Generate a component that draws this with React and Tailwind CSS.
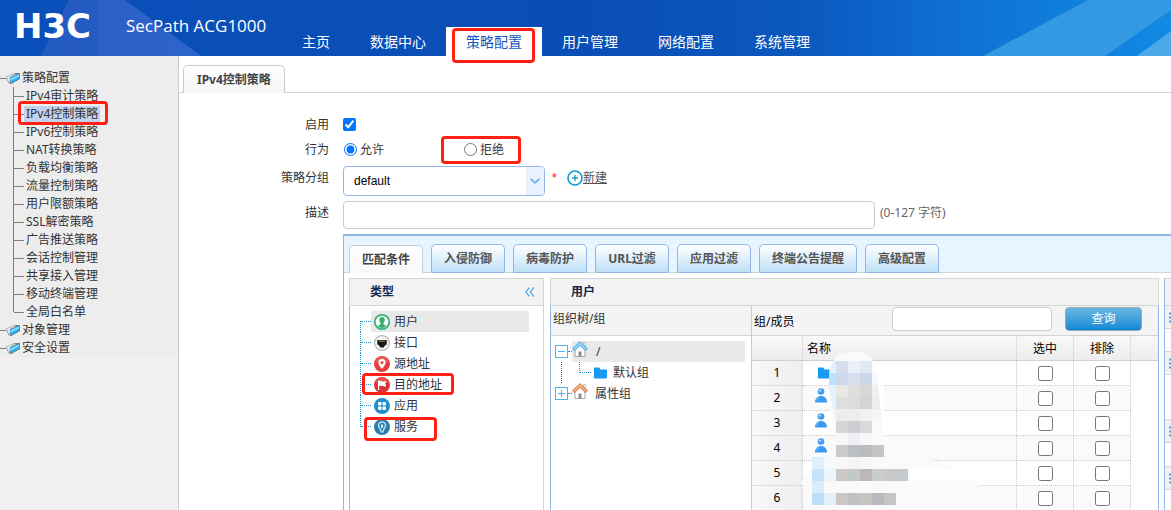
import { useState } from 'react';

const NAV = ['主页', '数据中心', '策略配置', '用户管理', '网络配置', '系统管理'];

const POLICY_ITEMS = [
  'IPv4审计策略',
  'IPv4控制策略',
  'IPv6控制策略',
  'NAT转换策略',
  '负载均衡策略',
  '流量控制策略',
  '用户限额策略',
  'SSL解密策略',
  '广告推送策略',
  '会话控制管理',
  '共享接入管理',
  '移动终端管理',
  '全局白名单',
];

const TABS = ['匹配条件', '入侵防御', '病毒防护', 'URL过滤', '应用过滤', '终端公告提醒', '高级配置'];

const TYPES = [
  { label: '用户', icon: 'user' },
  { label: '接口', icon: 'port' },
  { label: '源地址', icon: 'pin' },
  { label: '目的地址', icon: 'flag', mark: 'left-3 right-[89px] -top-px h-[22px]' },
  { label: '应用', icon: 'apps' },
  { label: '服务', icon: 'service', mark: 'left-[14px] right-[106px] top-px h-6' },
];

const MEMBERS = ['folder', 'person', 'person', 'person', '', ''];

// [x, y, colour] of every 12px cell that hides a member name
const CELLS = [
  [36, 11, '#d6deec'], [48, 11, '#ebeff8'], [60, 11, '#e2e8f1'],
  [36, 23, '#cdd8e9'], [48, 23, '#d9e0ed'], [60, 23, '#ccd8ea'], [72, 23, '#f5f9fe'],
  [36, 35, '#e8e8e4'], [48, 35, '#dfdedd'], [60, 35, '#d8d7d6'], [72, 35, '#f0f0f1'],
  [36, 47, '#dedede'], [48, 47, '#dddcdb'], [60, 47, '#d5d4d2'], [72, 47, '#ededee'],
  [36, 59, '#ededee'], [48, 59, '#efecee'], [60, 59, '#eff2f1'], [72, 59, '#f5f5f6'],
  [36, 71, '#d5d6d6'], [48, 71, '#cdced4'], [60, 71, '#d9d9d9'],
  [36, 83, '#f7f7f7'], [48, 83, '#f0f0f4'], [60, 83, '#f8f8f8'], [72, 83, '#fafafa'],
  [36, 95, '#cbcbcb'], [48, 95, '#bcbfc2'], [60, 95, '#babdbd'], [72, 95, '#c4c4c2'],
  [12, 107, '#ddeffb'], [24, 107, '#f5fafd'], [36, 107, '#f8f8f8'], [48, 107, '#f4f4f4'], [60, 107, '#f7f7f7'],
  [12, 119, '#c4e3fb'], [24, 119, '#eaf5fd'], [36, 119, '#cdc8c8'], [48, 119, '#c3c9c9'], [60, 119, '#beb7b7'],
  [72, 119, '#c8cccc'], [84, 119, '#cbc8ca'], [96, 119, '#c4cbcf'],
  [12, 131, '#d9ecf9'],
  [12, 143, '#bcdef9'], [24, 143, '#e3f1fa'], [36, 143, '#cac7c5'], [48, 143, '#c0c2c3'], [60, 143, '#c4c4c0'],
  [72, 143, '#bab8c0'], [84, 143, '#c4c6c6'],
];

function Mark({ className }) {
  return <span className={`absolute z-10 border-[3px] border-[#fe2013] rounded-[4px] pointer-events-none ${className}`} />;
}

function HeaderArt() {
  return (
    <svg className="absolute inset-0 w-full h-full" viewBox="0 0 1171 56" preserveAspectRatio="none" aria-hidden="true">
      <defs>
        <linearGradient id="sky" x1="0" x2="1">
          <stop offset="0" stopColor="#0a50ba" />
          <stop offset="0.5" stopColor="#0a4db5" />
          <stop offset="0.68" stopColor="#0b57be" />
          <stop offset="0.85" stopColor="#0f76d6" />
          <stop offset="1" stopColor="#118ae3" />
        </linearGradient>
        <linearGradient id="beam" x1="0" x2="1">
          <stop offset="0" stopColor="#2b5fc4" />
          <stop offset="1" stopColor="#2f65cd" />
        </linearGradient>
      </defs>
      <rect width="1171" height="56" fill="url(#sky)" />
      <path d="M69 0H125L201 56H41Z" fill="url(#beam)" opacity=".95" />
      <path d="M69 0H97V56H41Z" fill="#1d55bd" opacity=".5" />
      <path d="M1088 0H1171V10L1105 56H983Z" fill="#3499e3" />
      <path d="M1171 31V56H1137Z" fill="#4aa9e8" />
    </svg>
  );
}

function BookIcon() {
  return (
    <svg className="w-[14px] h-[14px] shrink-0" viewBox="0 0 14 14" aria-hidden="true">
      <path d="M0 6 8.500 2.200 13.800 2 14 8 5.200 13 2.500 12Z" fill="#64727c" />
      <path d="M.3 5.700 8.500 2.700l1.500.6-6 3V12L2.800 11.500Z" fill="#eaf3f8" stroke="#98a4ac" strokeWidth=".6" />
      <path d="M3.500 7.300 13.300 2.600 13.500 7.500 5.200 12.200Z" fill="#2aaaf0" />
      <path d="M4.200 7.600 12.800 3.500 13 5.400 4.900 9.800Z" fill="#86d8fc" />
    </svg>
  );
}

function TypeIcon({ name }) {
  const fill = {
    user: '#35ad6b',
    port: '#b9b9b9',
    pin: '#e5423f',
    flag: '#dc3338',
    apps: '#1e8dcb',
    service: '#2b7cab',
  }[name];
  return (
    <svg className="w-4 h-4 shrink-0" viewBox="0 0 16 16" aria-hidden="true">
      <circle cx="8" cy="8" r="8" fill={fill} />
      {name === 'user' && (
        <>
          <circle cx="8" cy="8" r="6.3" fill="#fff" />
          <path d="M8 3a2.8 2.8 0 0 0-2.7 3c0 1.3.5 2.3 1.3 3v1.3L3.6 12A6 6 0 0 0 12.4 12l-3-1.7V9c.8-.7 1.3-1.7 1.3-3A2.8 2.8 0 0 0 8 3Z" fill="#35ad6b" />
        </>
      )}
      {name === 'port' && (
        <>
          <circle cx="8" cy="8" r="6.8" fill="#f5f5f5" />
          <path d="M3.3 5h9.4v4.7h-1.5v1.6H10V12.4H6V11.3H4.8V9.7H3.3Z" fill="#171717" />
          <path d="M5 5.4h6V7H5Z" fill="#6d6533" />
        </>
      )}
      {name === 'pin' && (
        <>
          <path d="M1.2 6a7 7 0 0 1 13.6 0Z" fill="#f16d68" opacity=".6" />
          <path d="M8 3a3.6 3.6 0 0 0-3.6 3.6C4.4 9.200 8 13 8 13s3.600-3.800 3.600-6.400A3.600 3.600 0 0 0 8 3Z" fill="#fff" />
          <circle cx="8" cy="6.600" r="1.500" fill="#e5423f" />
        </>
      )}
      {name === 'flag' && (
        <>
          <path d="M1.200 6a7 7 0 0 1 13.600 0Z" fill="#ee6a68" opacity=".6" />
          <path d="M4 3.500h1.200V4c2-.8 3.200.9 5 .6l2-.4-1 2.600 1 2.400c-2.400.8-4-.8-7-.2V13H4Z" fill="#fff" />
        </>
      )}
      {name === 'apps' && (
        <g fill="#fff">
          <rect x="4" y="4" width="3.500" height="3.500" rx=".8" />
          <rect x="8.500" y="4" width="3.500" height="3.500" rx=".8" />
          <rect x="4" y="8.500" width="3.500" height="3.500" rx=".8" />
          <rect x="8.500" y="8.500" width="3.500" height="3.500" rx=".8" />
        </g>
      )}
      {name === 'service' && (
        <>
          <path d="M8 2.800A3.600 3.600 0 0 0 5.800 9.200L7 12.800h2l1.200-3.600A3.600 3.600 0 0 0 8 2.800Z" fill="none" stroke="#bfe3f5" strokeWidth="1.300" />
          <path d="M8 4.500 9.400 7 8 10 6.600 7Z" fill="#d8f0fb" />
        </>
      )}
    </svg>
  );
}

function HouseIcon({ roof, edge }) {
  return (
    <svg className="w-4 h-4 shrink-0" viewBox="0 0 16 16" aria-hidden="true">
      <path d="M3 8V15.500H13V8L8 3.500Z" fill="#fff" stroke="#a5a5a5" />
      <path d="M11.500 1.500h1.800V5h-1.800Z" fill="#fff" stroke="#a5a5a5" strokeWidth=".7" />
      <path d="M6.500 10.500h3v5h-3Z" fill="#8e8e8e" />
      <path d="M8 .6 15.500 7.600 13.600 9.700 8 4.600 2.400 9.700.5 7.600Z" fill={roof} stroke={edge} strokeWidth=".8" />
    </svg>
  );
}

function FolderIcon() {
  return (
    <svg className="w-[14px] h-3 shrink-0" viewBox="0 0 14 12" aria-hidden="true">
      <path d="M0 1.200Q0 .5.8.5H5l1.500 2H12.200Q13 2.500 13 3.300V10.700Q13 11.500 12.200 11.500H.8Q0 11.500 0 10.700Z" fill="#1599f3" />
    </svg>
  );
}

function PersonIcon() {
  return (
    <svg className="w-3 h-[15px]" viewBox="0 0 12 15" aria-hidden="true">
      <circle cx="6" cy="3.500" r="3.300" fill="#3f9df2" />
      <circle cx="5" cy="2.600" r="1.200" fill="#b5dcfb" />
      <path d="M0 14.500C0 10.500 2.500 8 6 8s6 2.500 6 6.500Z" fill="#3a99f1" />
      <path d="M1 13.500C1.200 11 2.500 9.500 4.500 9Z" fill="#8cc5f8" />
    </svg>
  );
}

function Toggle({ open }) {
  return (
    <button type="button" aria-label={open ? '收起' : '展开'} className="w-[13px] h-[13px] shrink-0 border border-[#4db1f2] bg-white">
      <svg className="w-[11px] h-[11px]" viewBox="0 0 11 11" stroke="#4db1f2" aria-hidden="true">
        <path d={open ? 'M2 5.500h7' : 'M2 5.500h7M5.500 2v7'} />
      </svg>
    </button>
  );
}

function Header() {
  return (
    <header className="relative h-14 shrink-0 bg-[#0a4db5] text-white">
      <HeaderArt />
      <div className="relative flex h-full">
        <div className="w-[126px] shrink-0 pl-[14px] pt-2 font-['DejaVu_Sans',sans-serif] text-[34px] leading-9 font-bold">H3C</div>
        <h1 className="w-[156px] shrink-0 pt-[14px] font-['Open_Sans',sans-serif] text-[17px] leading-6 whitespace-nowrap">SecPath ACG1000</h1>
        <nav className="flex items-end">
          {NAV.map((item) => (
            <a
              key={item}
              href="#"
              className={`relative px-5 text-sm leading-[29px] whitespace-nowrap ${item === '策略配置' ? 'bg-white text-[#1259bd]' : ''}`}
            >
              {item}
              {item === '策略配置' && <Mark className="left-[6px] right-[7px] top-px h-[35px]" />}
            </a>
          ))}
        </nav>
      </div>
    </header>
  );
}

function Root({ label }) {
  return (
    <a href="#" className="flex items-center h-[18px]">
      <span className="w-[6px] border-t border-[#808080]" />
      <BookIcon />
      <span className="pl-[2px]">{label}</span>
    </a>
  );
}

function Sidebar() {
  return (
    <aside className="w-[179px] shrink-0 border-r border-[#ccc] bg-[#f0f0f0] text-[#333]">
      <div className="pt-[13px] pb-[1px] bg-[#ededed]">
        <Root label="策略配置" />
        <ul className="pl-[13px]">
          {POLICY_ITEMS.map((item, i) => (
            <li key={item} className="relative flex items-center h-[18px]">
              <span className={`w-px bg-[#808080] ${i === POLICY_ITEMS.length - 1 ? 'h-[9px] self-start' : 'h-full'}`} />
              <span className="w-[10px] border-t border-[#808080]" />
              <a href="#" className={`px-[2px] leading-4 ${i === 1 ? 'bg-[#c1d2ee]' : ''}`}>
                {item}
              </a>
              {i === 1 && <Mark className="left-[5px] w-[90px] -top-1 h-6" />}
            </li>
          ))}
        </ul>
        <Root label="对象管理" />
        <Root label="安全设置" />
      </div>
    </aside>
  );
}

function TypePanel() {
  return (
    <section className="w-[195px] shrink-0 flex flex-col border border-[#d4d4d4] border-b-0">
      <div className="flex items-center justify-between h-[27px] pl-5 pr-2 bg-[#f3f3f3] border-b border-[#d4d4d4]">
        <h2 className="font-bold text-[#13294f]">类型</h2>
        <button type="button" aria-label="收起">
          <svg className="w-[10px] h-[10px]" viewBox="0 0 10 10" fill="none" stroke="#57a9e6" strokeWidth="1.200" aria-hidden="true">
            <path d="M4.500.5.8 5l3.700 4.500M9 .5 5.300 5 9 9.500" />
          </svg>
        </button>
      </div>
      <ul className="flex-1 pt-[5px] -ml-px border-l border-[#94b5e8]">
        {TYPES.map(({ label, icon, mark }, i) => (
          <li key={label} className="relative flex h-[21px] pl-[10px] pr-[14px]">
            <span className={`border-l border-dotted border-[#1c94e0] ${i === 0 ? 'h-[11px] self-end' : i === 5 ? 'h-[11px]' : ''}`} />
            <span className="w-[10px] h-[11px] border-b border-dotted border-[#1c94e0]" />
            <a href="#" className={`flex flex-1 items-center pl-[3px] gap-1 text-[#333] ${i === 0 ? 'bg-[#e9e9e9]' : ''}`}>
              <TypeIcon name={icon} />
              {label}
            </a>
            {mark && <Mark className={mark} />}
          </li>
        ))}
      </ul>
    </section>
  );
}

function GroupTree() {
  return (
    <div className="w-[200px] shrink-0 flex flex-col">
      <div className="h-[30px] pl-[2px] leading-[26px] bg-[#f4f4f4] border-b border-[#d4d4d4] text-[#333]">组织树/组</div>
      <div className="flex-1 pt-[5px] pl-1 pr-[6px] bg-white text-[#333]">
        <div className="flex items-center h-[21px]">
          <Toggle open />
          <span className="w-1 border-t border-dotted border-[#1c94e0]" />
          <a href="#" className="flex flex-1 h-full gap-2 bg-[#e9e9e9] leading-[22px]">
            <HouseIcon roof="#8bd3f7" edge="#3aa3dd" />/
          </a>
        </div>
        <div className="flex h-[21px] pl-[6px]">
          <span className="w-[18px] border-l border-dotted border-[#555]" />
          <span className="w-[12px] h-[11px] border-l border-b border-dotted border-[#1c94e0]" />
          <a href="#" className="flex items-center gap-[5px] pl-[3px]">
            <FolderIcon />
            默认组
          </a>
        </div>
        <div className="flex items-center h-[21px]">
          <Toggle />
          <span className="w-1 border-t border-dotted border-[#1c94e0]" />
          <a href="#" className="flex h-full gap-[7px] leading-[22px]">
            <HouseIcon roof="#f5a97d" edge="#cf6a35" />
            属性组
          </a>
        </div>
      </div>
    </div>
  );
}

function Mosaic() {
  return (
    <svg className="absolute left-[48px] top-[14px] w-[200px] h-[166px] pointer-events-none" viewBox="0 0 200 166" aria-hidden="true">
      <path d="M34 8Q42 1 58 2 70 2 74 14L82 80 86 93 110 108Q135 108 157 119L110 119 110 131H176L184 143H110V155L66 166H20L4 144 2 132Q10 114 38 103L40 98 35 86 30 60Z" fill="#fafafa" />
      <path d="M34 11H36V23H29Q30 15 34 11Z" fill="#e3f1fd" />
      <path d="M29 23H36V35H29Z" fill="#bce1fb" />
      <path d="M29 35H36V70Q31 54 29 35Z" fill="#e5f3fd" />
      {CELLS.map(([x, y, color]) => (
        <rect key={`${x}-${y}`} x={x} y={y} width="12" height="12" fill={color} shapeRendering="crispEdges" />
      ))}
      <path d="M76 11 79 45 82 71H84V11Z" fill="#fff" />
    </svg>
  );
}

function MemberTable() {
  const cell = 'border-r border-b border-dotted border-[#c8c8c8] p-0';
  const head = 'border-r border-dotted border-r-[#c8c8c8] p-0 font-normal';
  return (
    <div className="relative">
      <table className="w-full table-fixed border-separate border-spacing-0 text-black">
        <colgroup>
          <col className="w-[51px]" />
          <col />
          <col className="w-[57px]" />
          <col className="w-[57px]" />
          <col className="w-[27px]" />
        </colgroup>
        <thead>
          <tr className="h-[25px] bg-linear-to-b from-[#f9f9f9] to-[#ececec] shadow-[inset_0_-1px_0_#d0d0d0]">
            <th className={head} aria-label="序号" />
            <th className={`${head} pl-1 text-left`}>名称</th>
            <th className={head}>选中</th>
            <th className={head}>排除</th>
            <th className="p-0" />
          </tr>
        </thead>
        <tbody>
          {MEMBERS.map((icon, i) => (
            <tr key={i} className={`h-[25px] ${i % 2 ? 'bg-[#fafafa]' : 'bg-white'}`}>
              <td className={`${cell} text-center bg-linear-to-r from-[#f8f8f8] to-[#eeeeee]`}>{i + 1}</td>
              <td className={`${cell} pl-3`}>
                {icon === 'folder' && <div className="pl-[3px]"><FolderIcon /></div>}
                {icon === 'person' && <div className="pb-[5px]"><PersonIcon /></div>}
              </td>
              {['选中', '排除'].map((name) => (
                <td key={name} className={cell}>
                  <input type="checkbox" aria-label={`${name} ${i + 1}`} className="block mx-auto w-[15px] h-[15px]" />
                </td>
              ))}
              <td className="p-0 bg-white" />
            </tr>
          ))}
        </tbody>
      </table>
      <Mosaic />
    </div>
  );
}

function UserPanel() {
  return (
    <section className="flex-1 min-w-0 flex flex-col border border-[#d4d4d4] border-b-0">
      <h2 className="h-[27px] pl-5 leading-[26px] font-bold text-[#13294f] bg-[#f3f3f3] border-b border-[#d4d4d4]">用户</h2>
      <div className="flex flex-1 min-h-0 -mx-px border-x border-[#94b5e8]">
        <GroupTree />
        <div className="flex-1 min-w-0 border-l border-[#ccc]">
          <div className="flex items-start h-[30px] pt-px pl-[2px] pr-4 bg-[#f4f4f4] border-b border-[#d4d4d4]">
            <label htmlFor="member" className="mr-auto leading-[30px] text-black">组/成员</label>
            <input id="member" type="text" className="w-40 h-6 px-2 bg-white border border-[#ccc] rounded-[4px]" />
            <button
              type="button"
              className="w-[77px] h-6 ml-[13px] rounded-[4px] border border-[#9aa7b0] bg-linear-to-b from-[#67b8e2] to-[#0289d6] text-white leading-[22px]"
            >
              查询
            </button>
          </div>
          <MemberTable />
        </div>
      </div>
    </section>
  );
}

function ListBar({ className }) {
  return (
    <div className={`flex items-center h-6 pl-1 bg-[#f2f2f2] border-b border-[#d4d4d4] ${className}`}>
      <svg className="w-3 h-[11px] shrink-0" viewBox="0 0 12 11" fill="#45aae4" aria-hidden="true">
        <path d="M0 .5h2v2H0zM3 .5h9v2H3zM0 4.500h2v2H0zM3 4.500h9v2H3zM0 8.500h2v2H0zM3 8.500h9v2H3z" />
      </svg>
    </div>
  );
}

// The selected-items column starts at the window's right edge
function SelectedPanel() {
  return (
    <section className="w-[7px] shrink-0 overflow-hidden border-l border-[#94b5e8]">
      <div className="h-7 bg-[#f3f3f3] border-y border-[#d4d4d4]" />
      <ListBar className="h-[23px]" />
      <ListBar className="mt-[22px] border-t" />
      <ListBar className="mt-11 border-t" />
      <ListBar className="mt-[23px] border-t" />
    </section>
  );
}

function PolicyForm() {
  const [enabled, setEnabled] = useState(true);
  const [action, setAction] = useState('允许');
  const label = 'w-[150px] shrink-0 text-right leading-6';
  return (
    <form className="pt-[19px] text-[#333]">
      <div className="flex items-center gap-[14px] h-[25px]">
        <label htmlFor="enabled" className={label}>启用</label>
        <input id="enabled" type="checkbox" className="w-[13px] h-[13px]" checked={enabled} onChange={(e) => setEnabled(e.target.checked)} />
      </div>
      <div className="flex items-center gap-[14px] h-[25px]">
        <span className={label}>行为</span>
        {['允许', '拒绝'].map((name) => (
          <label key={name} className="relative flex items-center gap-[3px] w-[106px] leading-6 pl-px">
            <input type="radio" name="action" className="w-[13px] h-[13px]" checked={action === name} onChange={() => setAction(name)} />
            {name}
            {name === '拒绝' && <Mark className="-left-[22px] w-20 -top-[2px] h-7" />}
          </label>
        ))}
      </div>
      <div className="flex gap-[14px] mt-1 h-[30px]">
        <label htmlFor="group" className={label}>策略分组</label>
        <div className="relative w-[202px]">
          <select
            id="group"
            className="w-full h-full pl-[10px] appearance-none bg-white border border-[#94b5e8] rounded-[4px] font-['Liberation_Sans',sans-serif] text-black"
          >
            <option>default</option>
          </select>
          <span className="absolute right-px top-px bottom-px w-[18px] flex items-center justify-center bg-[#e9f2fe] rounded-r-[3px] pointer-events-none">
            <svg className="w-[10px] h-[6px]" viewBox="0 0 10 6" fill="none" stroke="#66b7ee" strokeWidth="1.800" aria-hidden="true">
              <path d="M.6.8 5 4.800 9.400.8" />
            </svg>
          </span>
        </div>
        <div className="flex items-start -ml-[7px] leading-6">
          <span className="w-[15px] font-['Liberation_Sans',sans-serif] text-[#f00]">*</span>
          <a href="#" className="flex items-center text-[#555]">
            <svg className="w-4 h-4" viewBox="0 0 16 16" fill="none" stroke="#0c9bd0" aria-hidden="true">
              <circle cx="8" cy="8" r="7" strokeWidth="1.600" />
              <path d="M5 8h6M8 5v6" strokeWidth="1.300" />
            </svg>
            <span className="underline">新建</span>
          </a>
        </div>
      </div>
      <div className="flex gap-[14px] mt-[5px] h-7">
        <label htmlFor="desc" className={label}>描述</label>
        <input id="desc" type="text" className="w-[532px] h-full px-2 border border-[#ccc] rounded-[4px]" />
        <span className="-ml-[9px] leading-6 text-[#666]">(0-127 字符)</span>
      </div>
    </form>
  );
}

export default function App() {
  const [tab, setTab] = useState('匹配条件');

  return (
    <div className="h-screen flex flex-col overflow-hidden bg-white font-['Noto_Sans','Noto_Sans_CJK_SC',sans-serif] text-xs">
      <Header />
      <div className="flex flex-1 min-h-0">
        <Sidebar />
        <main className="flex-1 min-w-0 flex flex-col">
          <div className="flex items-end h-[37px] shrink-0 pl-1 border-b border-[#d4d4d4]">
            <h2 className="-mb-px px-[13px] h-7 leading-7 font-bold text-[#444] border border-b-0 border-[#ccc] rounded-t-[5px] bg-linear-to-b from-white to-[#f6f6f6]">
              IPv4控制策略
            </h2>
          </div>
          <PolicyForm />

          <div className="flex flex-col flex-1 min-h-0 ml-[164px] mt-[5px] border-l border-t-2 border-[#94b5e8]">
            <div className="flex items-end h-[37px] shrink-0 gap-2 pl-[5px] bg-[#e6f5ff] border-b border-[#d4d4d4]">
              {TABS.map((name) => (
                <button
                  key={name}
                  type="button"
                  onClick={() => setTab(name)}
                  className={`min-w-[74px] px-3 -mb-px border rounded-t-[5px] font-bold leading-7 whitespace-nowrap ${
                    name === tab
                      ? 'h-7 border-b-0 border-[#ccc] bg-linear-to-b from-white to-[#f8f8f8] text-[#444]'
                      : 'h-[29px] border-[#94b5e8] bg-linear-to-b from-white to-[#bde0f7] text-[#555]'
                  }`}
                >
                  {name}
                </button>
              ))}
            </div>
            <div className="flex flex-1 min-h-0 pt-[5px] pl-[5px]">
              <TypePanel />
              <div className="w-[6px] shrink-0" />
              <UserPanel />
              <div className="w-[5px] shrink-0" />
              <SelectedPanel />
            </div>
          </div>
        </main>
      </div>
    </div>
  );
}
